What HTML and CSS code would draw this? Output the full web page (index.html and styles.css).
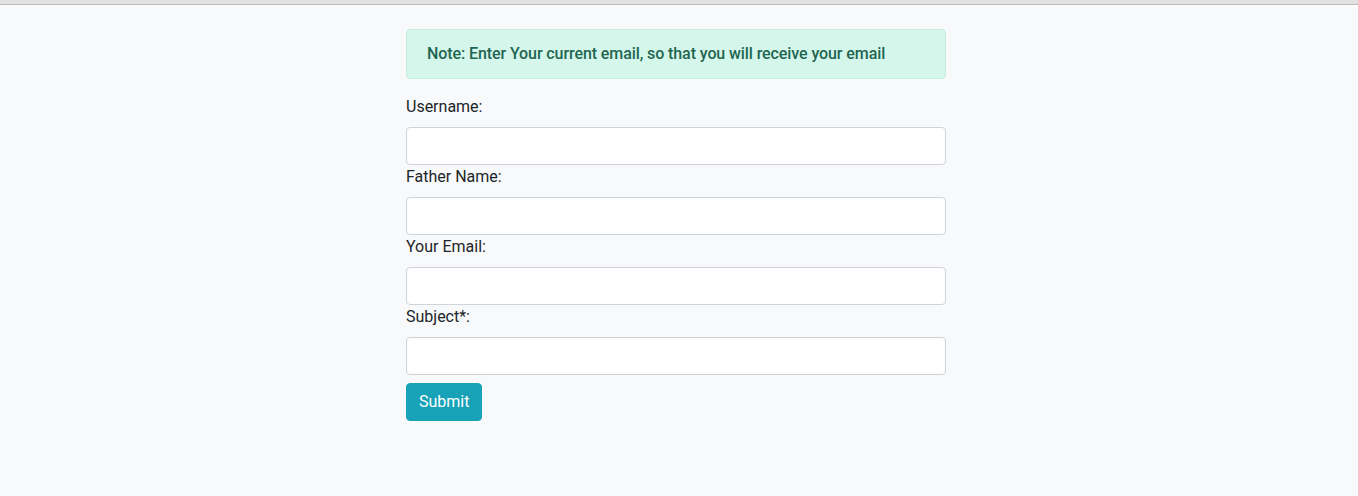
FILE: index.html
```html
<!DOCTYPE html>
<html lang="en">
<head>
<meta charset="utf-8">
<title>Contact</title>
<link rel="stylesheet" href="styles.css">
</head>
<body>
<div class="topbar"></div>
<main class="page">
  <form class="form">
    <div class="alert">Note: Enter Your current email, so that you will receive your email</div>
    <div class="group">
      <label class="label">Username:</label>
      <input class="input" type="text">
    </div>
    <div class="group">
      <label class="label">Father Name:</label>
      <input class="input" type="text">
    </div>
    <div class="group">
      <label class="label">Your Email:</label>
      <input class="input" type="text">
    </div>
    <div class="group">
      <label class="label">Subject*:</label>
      <input class="input" type="text">
    </div>
    <div class="actions">
      <button class="btn" type="button">Submit</button>
    </div>
  </form>
</main>
</body>
</html>
```
FILE: styles.css
```css
* { box-sizing: border-box; }
html, body { margin: 0; padding: 0; }
body {
  background: #f8f9fa;
  font-family: Roboto, "Liberation Sans", sans-serif;
  font-size: 16px;
  line-height: 24px;
  color: #212529;
  height: 496px;
}
.topbar {
  height: 5px;
  background: #e1e1e1;
  border-bottom: 1px solid #bcbcbc;
}
.page {
  display: flex;
  justify-content: center;
  padding: 24px 6px 0 0;
}
.form {
  width: 540px;
  display: flex;
  flex-direction: column;
}
.alert {
  background: #d5f6eb;
  border: 1px solid #c5eedf;
  color: #1f6651;
  font-weight: 500;
  letter-spacing: -0.09px;
  border-radius: 4px;
  padding: 12px 20px;
  margin-bottom: 16px;
}
.group {
  display: flex;
  flex-direction: column;
}
.label {
  margin-bottom: 8px;
}
.input {
  height: 38px;
  border: 1px solid #ced4da;
  border-radius: 4px;
  background: #fff;
  font: inherit;
  padding: 6px 12px;
}
.actions {
  margin-top: 8px;
}
.btn {
  background: #17a2b8;
  color: #fff;
  border: 1px solid #17a2b8;
  border-radius: 4px;
  font: inherit;
  padding: 6px 12px;
  height: 38px;
}
```
